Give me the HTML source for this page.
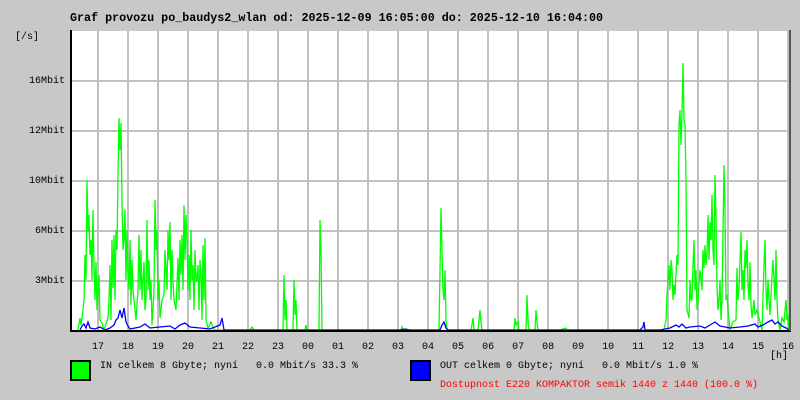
<!DOCTYPE html>
<html><head><meta charset="utf-8"><style>
body{margin:0;background:#c8c8c8;width:800px;height:400px;overflow:hidden;position:relative;font-family:"Liberation Mono",monospace}
.t{position:absolute;white-space:pre;font-size:10px;color:#000;line-height:10px}
</style></head><body>
<svg width="800" height="400" style="position:absolute;left:0;top:0">
<rect x="71" y="31" width="719" height="299" fill="#fff"/>
<g stroke="#c0c0c0" stroke-width="2">
<path d="M98 31V330M128 31V330M158 31V330M188 31V330M218 31V330M248 31V330M278 31V330M308 31V330M338 31V330M368 31V330M398 31V330M428 31V330M458 31V330M488 31V330M518 31V330M548 31V330M578 31V330M608 31V330M638 31V330M668 31V330M698 31V330M728 31V330M758 31V330M788 31V330"/>
<path d="M71 81H790M71 131H790M71 181H790M71 231H790M71 281H790"/>
</g>
<g fill="none" stroke="#00ff00" stroke-width="1.3">
<polyline points="78,330 80,318 81,325 83,310 84,300 85,255 86,280 87,180 88,232 89,215 90,255 91,240 92,280 93,210 94,265 95,300 96,262 97,310 99,275 100,320 102,323 104,330 108,318 109,300 110,265 111,320 112,240 113,288 114,235 115,300 116,230 117,250 118,175 119,118 120,150 121,123 122,200 123,250 124,240 125,210 126,280 127,230 128,270 129,290 130,240 131,305 132,260 133,290 134,300 136,320 138,290 139,235 140,290 141,250 142,300 143,280 144,262 145,310 146,300 147,220 148,290 149,260 150,300 151,280 152,325 154,290 155,200 156,250 157,230 158,300 159,280 160,318 162,300 164,295 165,250 166,270 167,290 168,230 169,260 170,222 171,300 172,250 173,280 174,300 176,310 178,258 179,300 180,240 181,275 182,235 183,290 184,205 185,260 186,215 187,240 188,290 189,255 190,300 191,230 192,280 193,265 194,310 195,250 196,278 197,282 198,265 199,310 200,260 201,275 202,320 203,245 204,300 205,238 206,320 208,328 211,322 214,330 250,330 252,327 254,330 283,330 284,275 285,320 286,300 287,330 293,330 294,280 295,315 296,300 297,330 305,330 306,325 307,330 319,330 320,220 321,250 322,330 401,330 402,327 403,330 439,330 440,270 441,208 442,250 443,290 444,300 445,270 446,320 447,330 471,330 473,318 474,330 478,330 480,310 481,322 482,330 514,330 515,318 516,325 518,322 519,330 526,330 527,295 528,322 529,330 535,330 536,310 537,322 538,330 560,330 566,328 567,330 664,330 666,320 667,295 668,280 669,265 670,290 671,260 672,270 673,300 674,285 675,295 676,275 677,255 678,265 679,125 680,110 681,145 682,112 683,63 684,120 685,125 686,180 687,310 689,318 690,280 691,300 692,300 693,265 694,240 695,290 696,270 697,310 698,300 700,270 701,280 702,290 703,250 704,268 705,245 706,265 707,255 708,215 709,260 710,222 711,240 712,195 713,250 714,265 715,175 716,220 717,285 718,310 719,300 720,280 721,320 722,300 724,165 725,210 726,300 727,295 728,310 730,330 733,322 736,320 737,268 738,300 739,290 740,260 741,232 742,290 743,270 744,300 745,250 746,268 747,240 748,285 749,300 750,262 751,305 752,318 754,300 755,315 757,310 762,330 764,265 765,240 766,290 767,310 768,280 769,300 770,315 772,275 773,260 774,280 775,300 776,250 777,300 778,320 780,330 782,318 784,322 786,300 787,320 788,315 789,330"/>
</g>
<g fill="none" stroke="#0000ff" stroke-width="1.3">
<polyline points="80,330 82,326 84,324 86,328 88,322 90,328 95,329 100,327 105,330 110,328 114,325 116,320 118,318 120,310 122,318 124,308 126,322 128,326 130,329 140,327 145,324 150,328 160,327 170,326 175,329 180,325 185,323 190,327 200,328 210,329 220,325 222,318 224,330 400,330 405,329 410,330 440,330 442,325 444,322 446,328 448,330 640,330 643,327 644,322 645,330 660,330 665,329 670,328 676,325 679,327 682,324 686,328 690,327 700,326 705,328 710,325 715,322 720,326 730,328 740,327 748,326 755,324 758,327 763,325 768,322 772,320 775,324 778,322 782,326 786,328 789,330"/>
</g>
<path d="M71 30V331H790V30" fill="none" stroke="#000" stroke-width="2"/>
<path d="M790 30V331" stroke="#555" stroke-width="2"/>
<rect x="71" y="361" width="19" height="19" fill="#00ff00" stroke="#000" stroke-width="2"/>
<rect x="411" y="361" width="19" height="19" fill="#0000ff" stroke="#000" stroke-width="2"/>
</svg>
<div class="t" style="left:70px;top:12px;font-size:11.7px;font-weight:bold;line-height:12px">Graf provozu po_baudys2_wlan od: 2025-12-09 16:05:00 do: 2025-12-10 16:04:00</div>
<div class="t" style="left:15px;top:33px">[/s]</div>
<div class="t" style="left:0;width:65px;text-align:right;top:77px">16Mbit</div>
<div class="t" style="left:0;width:65px;text-align:right;top:127px">12Mbit</div>
<div class="t" style="left:0;width:65px;text-align:right;top:177px">10Mbit</div>
<div class="t" style="left:0;width:65px;text-align:right;top:227px">6Mbit</div>
<div class="t" style="left:0;width:65px;text-align:right;top:277px">3Mbit</div>
<div class="t" style="left:92px;top:343px;font-size:10px;letter-spacing:0">17   18   19   20   21   22   23   00   01   02   03   04   05   06   07   08   09   10   11   12   13   14   15   16</div>
<div class="t" style="left:770px;top:352px">[h]</div>
<div class="t" style="left:100px;top:362px">IN celkem 8 Gbyte; nyní   0.0 Mbit/s 33.3 %</div>
<div class="t" style="left:440px;top:362px">OUT celkem 0 Gbyte; nyní   0.0 Mbit/s 1.0 %</div>
<div class="t" style="left:440px;top:381px;color:#ff0000">Dostupnost E220 KOMPAKTOR semik 1440 z 1440 (100.0 %)</div>
</body></html>
